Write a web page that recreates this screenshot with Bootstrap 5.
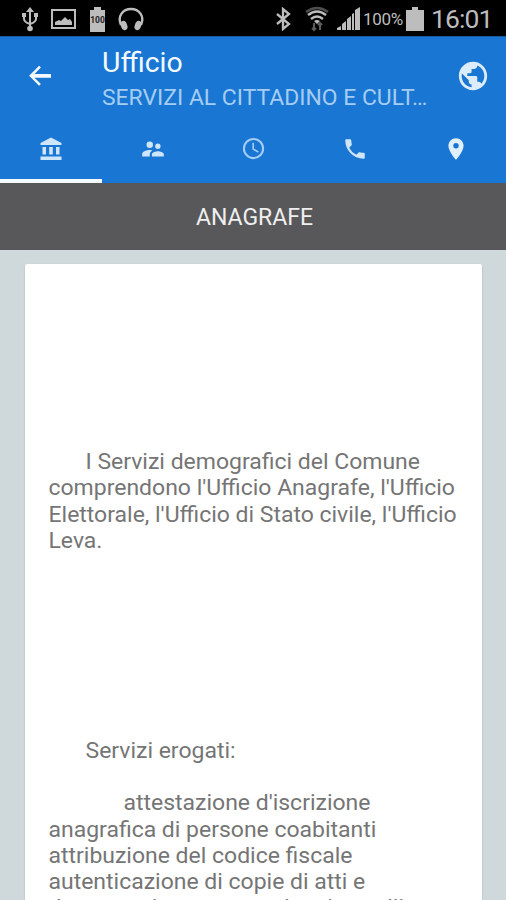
<!DOCTYPE html>
<html lang="it">
<head>
<meta charset="utf-8">
<meta name="viewport" content="width=device-width, initial-scale=1">
<title>Ufficio</title>
<link href="https://cdn.jsdelivr.net/npm/bootstrap@5.3.0/dist/css/bootstrap.min.css" rel="stylesheet">
<style>
body{font-family:Roboto,"Noto Sans",sans-serif;background:#cfd8da;height:900px}
svg{display:block;flex:none}
.statusbar{height:36px;background:#000;color:#bdbdbd;padding:2px 13px 0 19px}
.picture-icon{margin-left:8px}
.battery-icon{margin-left:11px}
.headphones-icon{margin-left:9px}
.wifi-icon{margin-left:11px}
.signal-icon{margin-left:4px}
.pct{font-size:17px;margin-left:2px;width:40px;line-height:34px;letter-spacing:-.3px}
.full-icon{margin-left:3px}
.clock{font-size:26.5px;margin-left:7px;line-height:32px;width:62px;letter-spacing:-.9px}
.appbar{background:#1976d2;height:147px;border-top:1px solid #17599c}
.toolbar{height:78px;padding:0 18px 0 25px}
.back-icon{margin-top:24px}
.globe-icon{margin-top:22px;margin-right:-2px}
.office{font-size:28.4px;line-height:32px;color:#f3faff;margin-top:10px}
.sector{font-size:22.9px;line-height:28px;color:#a5cdf3;margin-top:5px}
.titles{margin-left:47px;width:330px}
.tabs{height:68px}
.tab-item{width:101px;padding-top:21px;color:#cfe5fa}
.tab-item.current{border-bottom:4px solid #f5fbff;width:102px;padding-top:22px}
.heading{height:67px;background:#58585a;color:#efefef;font-size:23px;line-height:69px;padding-left:3px}
.sheet{margin:14px 24px 0 25px;padding:185px 0 0 23.5px;height:636px;border-radius:2px 2px 0 0;box-shadow:0 1px 2px #0003;color:#757575;font-size:22.98px;line-height:26.25px;white-space:pre}
.sheet p{margin:0}
.indent{text-indent:37px}
.indent-2{text-indent:75px}
.gap-lines{height:183.75px}
</style>
</head>
<body class="overflow-hidden">
<div class="statusbar d-flex align-items-center">
<svg width="22" height="26" viewBox="0 0 22 26" fill="none" stroke="#bdbdbd" stroke-width="2"><path d="M11 4v19M5 10v3q0 3 6 5M17 10v3q0 3-6 5"/><path d="M7 6l4-5 4 5z" fill="#bdbdbd" stroke="none"/><circle cx="11" cy="22.5" r="2.8" fill="#bdbdbd" stroke="none"/><path d="M3 7h4v4H3zM15 7h4v4h-4z" fill="#bdbdbd" stroke="none"/></svg>
<svg class="picture-icon" width="28" height="24" viewBox="0 0 28 24"><path d="M3 3h23v18H3z" fill="none" stroke="#bdbdbd" stroke-width="2"/><path d="M6 18v-3l4-2 2 1 4-4 3 3 2-1 2 3v3z" fill="#bdbdbd"/></svg>
<svg class="battery-icon" width="20" height="26" viewBox="0 0 20 26"><path d="M2 4h4V1h7v3h4v22H2z" fill="#bdbdbd"/><text x="9.500" y="17" text-anchor="middle" font-size="8.5" font-weight="bold" fill="#222">100</text></svg>
<svg class="headphones-icon" width="28" height="26" viewBox="0 0 28 26"><path d="M4 19c-4-9 2-16 10-16s14 7 10 16" fill="none" stroke="#bdbdbd" stroke-width="2.4"/><ellipse cx="7" cy="19.500" rx="3.200" ry="4.700" transform="rotate(-20 7 19.500)" fill="#bdbdbd"/><ellipse cx="21" cy="19.500" rx="3.200" ry="4.700" transform="rotate(20 21 19.500)" fill="#bdbdbd"/></svg>
<svg class="ms-auto" width="18" height="24" viewBox="0 0 18 24" fill="none" stroke="#bdbdbd" stroke-width="2.300"><path d="M3 7l12 10-6 5V2l6 5L3 17"/></svg>
<svg class="wifi-icon" width="28" height="26" viewBox="0 0 28 26" fill="none" stroke-width="2.5"><path d="M3 6q11-8 22 0" stroke="#4e4e4e"/><path d="M5 9q9-7 18 0M8 13q6-5 12 0" stroke="#bdbdbd"/><path d="M11 15q3-2 6 0l-3 3z" fill="#bdbdbd"/><path d="M11 17v7m-2-2l2 2 2-2M17 24v-7m-2 2l2-2 2 2" stroke="#5c5c5c" stroke-width="2"/></svg>
<svg class="signal-icon" width="26" height="24" viewBox="0 0 26 24" fill="#bdbdbd"><path d="M2 23v-2l4-2v4zM7 23v-6l4-3v9zM12 23V12l4-3v14zM17 23V7l2-1v17zM20 23V3l5-3v23z"/></svg>
<span class="pct">100%</span>
<svg class="full-icon" width="18" height="24" viewBox="0 0 18 24"><path d="M0 3h6V0h6v3h6v21H0z" fill="#bdbdbd"/></svg>
<span class="clock">16:01</span>
</div>
<header class="appbar">
<div class="toolbar d-flex">
<svg class="back-icon" width="30" height="30" viewBox="0 0 24 24" fill="#f3faff"><path d="M21 11H7.830l5.090-5.090L11.500 4.500 3.500 12.500l8 8 1.420-1.410L7.830 14H21z" transform="translate(-.2 -.7)"/></svg>
<div class="titles"><div class="office">Ufficio</div><div class="sector text-nowrap">SERVIZI AL CITTADINO E CULT…</div></div>
<svg class="globe-icon ms-auto" width="34" height="34" viewBox="0 0 24 24" fill="#dcecfb"><path d="M12 2C6.480 2 2 6.480 2 12s4.480 10 10 10 10-4.480 10-10S17.520 2 12 2zm-1 17.930c-3.950-.49-7-3.850-7-7.930 0-.62.080-1.210.21-1.790L9 15v1c0 1.100.9 2 2 2v1.930zm6.900-2.540c-.26-.81-1-1.390-1.900-1.390h-1v-3c0-.55-.45-1-1-1H8v-2h2c.55 0 1-.45 1-1V7h2c1.100 0 2-.9 2-2v-.41c2.930 1.190 5 4.060 5 7.410 0 2.080-.8 3.970-2.100 5.390z"/></svg>
</div>
<nav class="tabs d-flex">
<div class="tab-item current d-flex justify-content-center"><svg width="24" height="24" viewBox="0 0 24 24" fill="currentColor"><path d="M12 .5l10.500 5.500v2h-21V6zM3.500 10h3.500v7.500H3.500zM10.200 10h3.600v7.500h-3.600zM17 10h3.500v7.500H17zM1.500 19.500h21V23h-21z"/></svg></div>
<div class="tab-item d-flex justify-content-center"><svg width="26" height="26" viewBox="0 0 24 24" fill="currentColor"><path d="M16.500 12a2.500 2.500 0 1 0 0-5 2.500 2.500 0 0 0 0 5zM9 11a3 3 0 1 0 0-6 3 3 0 0 0 0 6zm7.500 3c-1.830 0-5.500.92-5.500 2.750V19h11v-2.250c0-1.830-3.670-2.750-5.500-2.750zM9 13c-2.330 0-7 1.170-7 3.500V19h7v-2.250c0-.85.33-2.340 2.370-3.470C10.500 13.100 9.660 13 9 13z"/></svg></div>
<div class="tab-item d-flex justify-content-center"><svg width="25" height="25" viewBox="0 0 24 24" fill="none" stroke="#a5cdf3" stroke-width="2"><circle cx="12" cy="12" r="9.200"/><path d="M11.700 6.500v6l5 3" stroke-width="1.600"/></svg></div>
<div class="tab-item d-flex justify-content-center"><svg width="26" height="26" viewBox="0 0 24 24" fill="currentColor"><path d="M6.620 10.790a15.150 15.150 0 0 0 6.590 6.590l2.200-2.200c.27-.27.67-.36 1.020-.24 1.120.37 2.330.57 3.570.57.550 0 1 .45 1 1V20c0 .55-.45 1-1 1C10.610 21 3 13.390 3 4c0-.55.45-1 1-1h3.500c.55 0 1 .45 1 1 0 1.250.2 2.450.57 3.570.110.350.030.740-.25 1.020z"/></svg></div>
<div class="tab-item d-flex justify-content-center"><svg width="26" height="26" viewBox="0 0 24 24" fill="#e0effc"><path d="M12 2C8.130 2 5 5.130 5 9c0 5.250 7 13 7 13s7-7.750 7-13c0-3.870-3.130-7-7-7zm0 9.500a2.500 2.500 0 1 1 0-5 2.500 2.500 0 0 1 0 5z"/></svg></div>
</nav>
</header>
<div class="heading text-center">ANAGRAFE</div>
<main class="sheet bg-white"><p class="indent">I Servizi demografici del Comune
comprendono l'Ufficio Anagrafe, l'Ufficio
Elettorale, l'Ufficio di Stato civile, l'Ufficio
Leva.</p><div class="gap-lines"></div><p class="indent">Servizi erogati:</p><br><p class="indent-2">attestazione d'iscrizione
anagrafica di persone coabitanti
attribuzione del codice fiscale
autenticazione di copie di atti e
documenti, spesso anche ai novelli</p></main>
</body>
</html>
